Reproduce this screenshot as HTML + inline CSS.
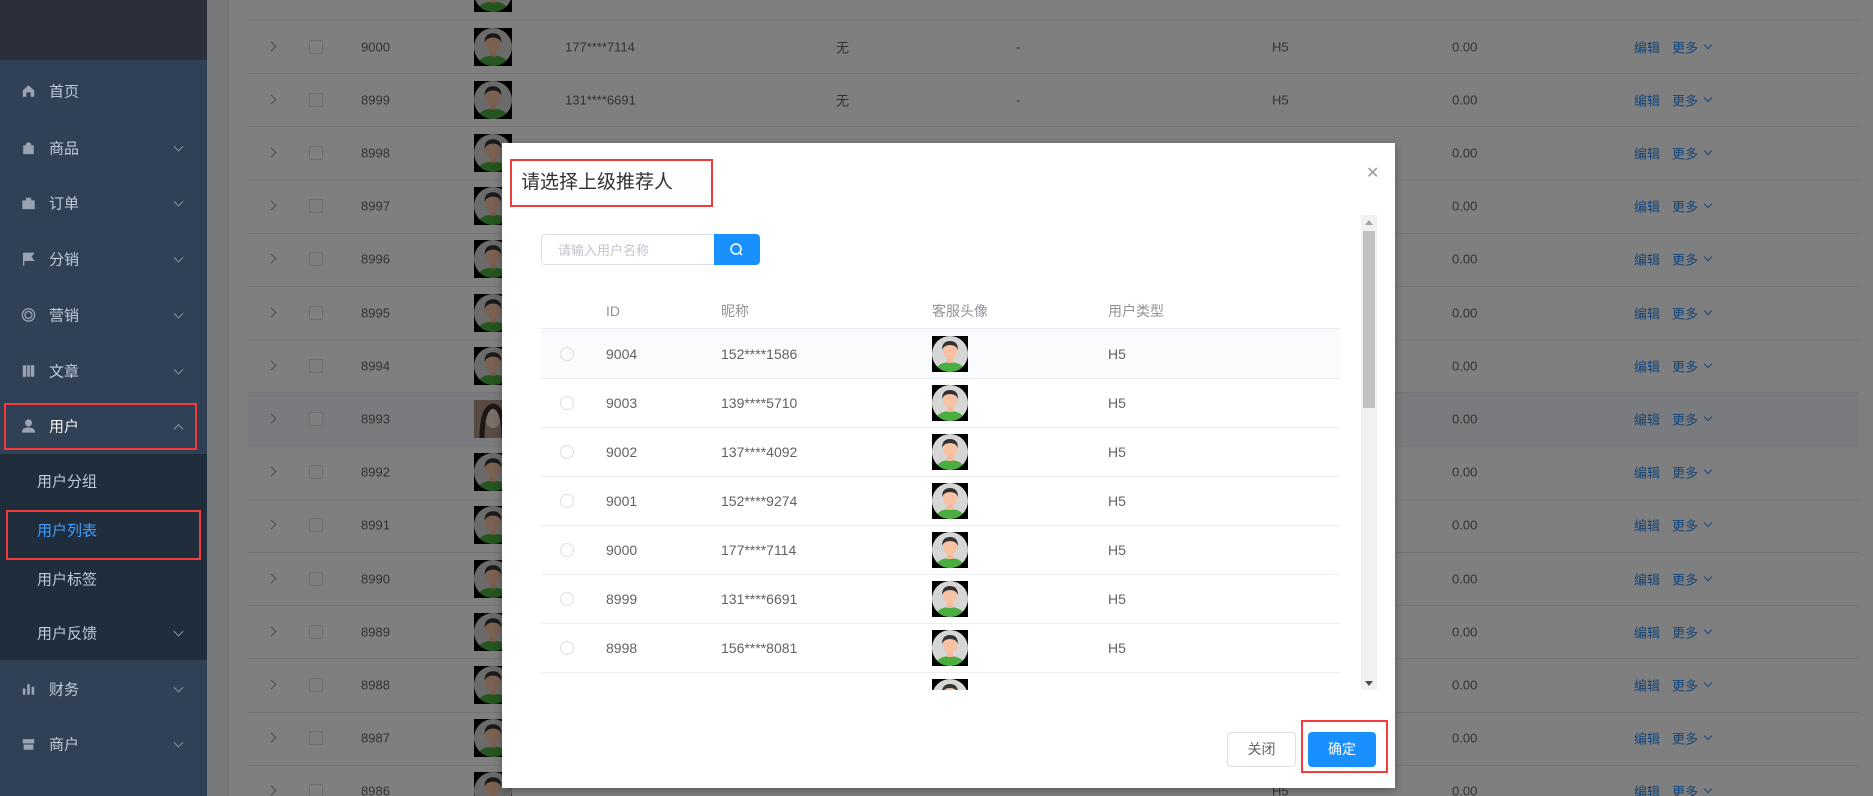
<!DOCTYPE html>
<html style="overflow:hidden;width:1873px;height:796px"><head><meta charset="utf-8"><style>
*{margin:0;padding:0;box-sizing:border-box}
html,body{width:1873px;height:796px;overflow:hidden;background:#fff}
body{font-family:"Liberation Sans","Noto Sans CJK SC",sans-serif;font-size:14px;color:#666}
#wrap{position:absolute;left:0;top:0;width:1873px;height:796px;overflow:hidden;background:#fff}
.a{position:absolute;white-space:nowrap}
#side{position:absolute;left:0;top:0;width:207px;height:796px;background:#304156}
#side .top{position:absolute;left:0;top:0;width:207px;height:60px;background:#2b2f3a}
#side .sub{position:absolute;left:0;top:454px;width:207px;height:206px;background:#1f2d3d}
.mi{position:absolute;left:49px;color:#bfcbd9;font-size:15px;transform:translateY(-50%);white-space:nowrap}
.ic{position:absolute;left:21px;width:15px;height:15px;transform:translateY(-50%)}
.chev{position:absolute;left:175px;width:7px;height:7px;border-right:1px solid #8a94a3;border-bottom:1px solid #8a94a3;transform:translateY(-70%) rotate(45deg)}
.red{position:absolute;border:2px solid #f23c3c}
.line{position:absolute;left:248px;width:1611px;height:1px;background:#e8e8e8}
.modal{position:absolute;left:502px;top:143px;width:893px;height:645px;background:#fff;box-shadow:0 2px 8px rgba(0,0,0,.3)}
.m{position:absolute;white-space:nowrap;color:#606266;font-size:14px;transform:translateY(-50%)}
.bt{transform:translateY(-50%)}
#ov{position:absolute;left:207px;top:0;width:1666px;height:796px;background:rgba(0,0,0,0.5)}
</style></head><body><div id="wrap">
<svg width="0" height="0" style="position:absolute"><defs>
<clipPath id="cc"><circle cx="18" cy="18" r="18"/></clipPath>
<symbol id="av" viewBox="0 0 36 36"><rect width="36" height="36" fill="#000"/><circle cx="18" cy="18" r="18" fill="#d6d6d6"/><g clip-path="url(#cc)"><ellipse cx="18" cy="36" rx="15" ry="10" fill="#4aad3f"/><rect x="15" y="19" width="6" height="8" fill="#f5b99a"/><ellipse cx="18" cy="15" rx="7" ry="8" fill="#f7c2a4"/><path d="M10 14 Q10 5 18 5 Q26 5 26 14 Q24 9 18 9 Q12 9 10 14Z" fill="#333"/></g></symbol>
</defs></svg>

<div class="a" style="left:207px;top:0;width:21px;height:796px;background:#f0f2f5"></div>
<div class="a" style="left:228px;top:0;width:1px;height:796px;background:#e6e6e6"></div>
<div class="a" style="left:248px;top:392px;width:1611px;height:54px;background:#f2f6fc"></div>
<div id="bg"></div>
<div id="ov"></div>
<div id="side"><div class="top"></div><div class="sub"></div></div>
<div id="menu"></div>
<div class="red" style="left:4px;top:403px;width:193px;height:47px"></div>
<div class="red" style="left:6px;top:510px;width:195px;height:50px"></div>

<div class="modal">
 <div class="red" style="left:8px;top:16px;width:203px;height:48px"></div>
 <div class="a" style="left:19px;top:24px;font-size:19px;color:#303133">请选择上级推荐人</div>
 <div class="a" style="left:864px;top:20px;font-size:16px;color:#999">✕</div>
 <div class="a" style="left:39px;top:91px;width:173px;height:31px;border:1px solid #dcdfe6;border-right:none;border-radius:4px 0 0 4px"></div>
 <div class="a" style="left:56px;top:97px;font-size:13px;color:#c0c4cc">请输入用户名称</div>
 <div class="a" style="left:212px;top:91px;width:46px;height:31px;background:#1890ff;border-radius:0 4px 4px 0"><svg width="46" height="31"><circle cx="22" cy="15" r="5" fill="none" stroke="#fff" stroke-width="1.5"/><path d="M25.5 18.5l2.5 2.5" stroke="#fff" stroke-width="1.5"/></svg></div>
 <div class="a" style="left:859px;top:72px;width:16px;height:475px;background:#f1f1f1"></div>
 <div class="a" style="left:861px;top:88px;width:12px;height:177px;background:#c1c1c1"></div>
 <div class="a" style="left:863px;top:77px;width:0;height:0;border-left:4px solid transparent;border-right:4px solid transparent;border-bottom:5px solid #a3a3a3"></div>
 <div class="a" style="left:863px;top:538px;width:0;height:0;border-left:4px solid transparent;border-right:4px solid transparent;border-top:5px solid #505050"></div>
 <div id="mt" style="position:absolute;left:0;top:0;width:893px;height:547px;overflow:hidden"></div>
 <div class="a" style="left:725px;top:589px;width:69px;height:35px;border:1px solid #dcdfe6;border-radius:4px;text-align:center;line-height:33px;color:#606266;font-size:14px">关闭</div>
 <div class="a" style="left:806px;top:589px;width:68px;height:35px;background:#1890ff;border-radius:4px;text-align:center;line-height:35px;color:#fff;font-size:14px">确定</div>
 <div class="red" style="left:799px;top:577px;width:87px;height:53px"></div>
</div>
</div>
<script>
var bg=document.getElementById('bg'),h='';
var ids=['8001','9000','8999','8998','8997','8996','8995','8994','8993','8992','8991','8990','8989','8988','8987','8986'];
var ph=['','177****7114','131****6691'];
for(var k=0;k<16;k++){
 var c=-6.6+53.2*k;
 h+='<div class="line" style="top:'+Math.round(c+26.6)+'px"></div>';
 h+='<div class="a" style="left:268px;top:'+(c-4)+'px;width:7px;height:7px;border-right:1px solid #999;border-top:1px solid #999;transform:rotate(45deg)"></div>';
 h+='<div class="a bt" style="left:309px;top:'+c+'px;width:14px;height:14px;border:1px solid #dcdfe6;border-radius:2px;background:#fff"></div>';
 h+='<div class="a bt" style="left:361px;top:'+c+'px;font-size:13px">'+ids[k]+'</div>';
 h+='<svg class="a" style="left:474px;top:'+(c-19)+'px" width="38" height="38">'+(k==8?'<rect width="38" height="38" fill="#b49488"/><ellipse cx="19" cy="18" rx="8" ry="10" fill="#f4dcd0"/><path d="M8 38 Q8 8 19 6 Q30 8 30 38" fill="none" stroke="#3a2c28" stroke-width="5"/>':'<use href="#av" width="38" height="38"/>')+'</svg>';
 if(ph[k])h+='<div class="a bt" style="left:565px;top:'+c+'px;font-size:13px">'+ph[k]+'</div><div class="a bt" style="left:836px;top:'+c+'px;font-size:13px">无</div><div class="a bt" style="left:1016px;top:'+c+'px;font-size:13px">-</div>';
 if(k>0){h+='<div class="a bt" style="left:1272px;top:'+c+'px;font-size:13px">H5</div>';
 h+='<div class="a bt" style="left:1452px;top:'+c+'px;font-size:13px">0.00</div>';
 h+='<div class="a bt" style="left:1634px;top:'+c+'px;font-size:13px;color:#2d8cf0">编辑</div>';
 h+='<div class="a bt" style="left:1672px;top:'+c+'px;font-size:13px;color:#2d8cf0">更多</div>';
 h+='<div class="a" style="left:1705px;top:'+(c-5)+'px;width:6px;height:6px;border-right:1px solid #2d8cf0;border-bottom:1px solid #2d8cf0;transform:rotate(45deg)"></div>';}
}
bg.innerHTML=h;
var m=[['首页',91,'home'],['商品',148,'bag',1],['订单',203,'case',1],['分销',259,'flag',1],['营销',315,'ring',1],['文章',371,'book',1],['用户',426,'user',2],['用户分组',481],['用户列表',530,null,0,1],['用户标签',579],['用户反馈',633,null,1],['财务',689,'bar',1],['商户',744,'shop',1]];
var icons={home:'<path d="M2 8L8.5 2 15 8V15H11V10H6V15H2Z" fill="#9aa3b1"/>',bag:'<path d="M3 6H14V15H3Z M6 6V4Q8.5 1 11 4V6" fill="#9aa3b1" stroke="#9aa3b1"/>',case:'<path d="M2 6H15V9H2Z M2 10H15V15H2Z M6 6V3H11V6" fill="#9aa3b1" stroke="#9aa3b1"/>',flag:'<path d="M3 2V16 M3 2H14L11 6 14 10H3" fill="#9aa3b1" stroke="#9aa3b1" stroke-width="1.5"/>',ring:'<circle cx="8.5" cy="8.5" r="7" fill="none" stroke="#9aa3b1" stroke-width="1.5"/><circle cx="8.5" cy="8.5" r="4" fill="none" stroke="#9aa3b1" stroke-width="1.5"/>',book:'<path d="M2 2H6V15H2Z M7 2H10V15H7Z M11 2H15V15H11Z" fill="#9aa3b1"/>',user:'<circle cx="8.5" cy="5" r="4" fill="#9aa3b1"/><path d="M1 16Q1 10 8.5 10 16 10 16 16Z" fill="#9aa3b1"/>',bar:'<path d="M2 8H5V15H2Z M7 3H10V15H7Z M12 6H15V15H12Z" fill="#9aa3b1"/>',shop:'<path d="M2 3H15V8H2Z M3 9H14V15H3Z" fill="#9aa3b1"/>'};
h='';
m.forEach(function(e){
 var sub=!e[2];
 h+='<div class="mi" style="top:'+e[1]+'px;left:'+(sub?37:49)+'px;'+(e[4]?'color:#409eff':(e[3]==2?'color:#f4f4f5':''))+'">'+e[0]+'</div>';
 if(e[2])h+='<svg class="ic" style="top:'+e[1]+'px" viewBox="0 0 17 17">'+icons[e[2]]+'</svg>';
 if(e[3]==1)h+='<div class="chev" style="top:'+e[1]+'px"></div>';
 if(e[3]==2)h+='<div class="chev" style="top:'+(e[1]+3)+'px;transform:translateY(-50%) rotate(225deg)"></div>';
});
document.getElementById('menu').innerHTML=h;
var mt=document.getElementById('mt');
h='<div class="m" style="left:104px;top:168px;color:#909399">ID</div><div class="m" style="left:219px;top:168px;color:#909399">昵称</div><div class="m" style="left:430px;top:168px;color:#909399">客服头像</div><div class="m" style="left:606px;top:168px;color:#909399">用户类型</div>';
h+='<div class="a" style="left:39px;top:186px;width:799px;height:49px;background:#fafbfd"></div>';
var r=[['9004','152****1586'],['9003','139****5710'],['9002','137****4092'],['9001','152****9274'],['9000','177****7114'],['8999','131****6691'],['8998','156****8081'],['8997','']];
h+='<div class="a" style="left:39px;top:185px;width:799px;height:1px;background:#ebeef5"></div>';
r.forEach(function(e,i){
 var c=211+49*i;
 h+='<div class="a" style="left:39px;top:'+(c+24)+'px;width:799px;height:1px;background:#ebeef5"></div>';
 h+='<div class="a" style="left:58px;top:'+(c-7)+'px;width:14px;height:14px;border:1px solid #dcdfe6;border-radius:50%"></div>';
 h+='<div class="m" style="left:104px;top:'+c+'px">'+e[0]+'</div><div class="m" style="left:219px;top:'+c+'px">'+e[1]+'</div><div class="m" style="left:606px;top:'+c+'px">H5</div>';
 h+='<svg class="a" style="left:430px;top:'+(c-18)+'px" width="36" height="36"><use href="#av" width="36" height="36"/></svg>';
});
mt.innerHTML=h;
</script>
</body></html>
